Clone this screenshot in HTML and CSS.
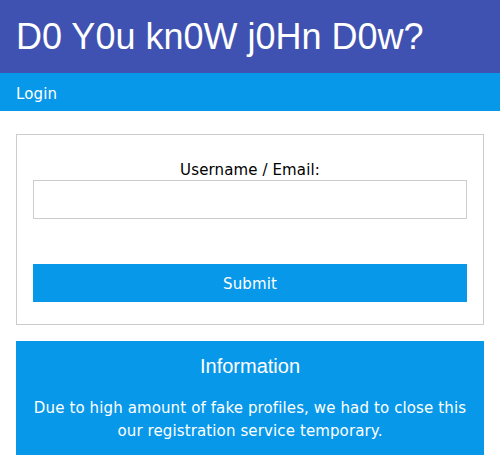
FILE: index.html
```html
<!DOCTYPE html>
<html>
<head>
<meta charset="utf-8">
<link rel="stylesheet" href="styles.css">
</head>
<body>
<header class="top">
  <h1 class="title">D0 Y0u kn0W j0Hn D0w?</h1>
</header>
<nav class="bar">
  <a class="bar-item">Login</a>
</nav>
<main class="main">
  <form class="card">
    <label class="label">Username / Email:</label>
    <input class="input" type="text">
    <button class="submit" type="button">Submit</button>
  </form>
  <section class="info">
    <h3 class="info-title">Information</h3>
    <p class="info-text">Due to high amount of fake profiles, we had to close this our registration service temporary.</p>
  </section>
</main>
</body>
</html>
```

FILE: styles.css
```css
html, body {
  margin: 0;
  padding: 0;
  background: #fff;
  font-family: "DejaVu Sans", Verdana, sans-serif;
  font-size: 15px;
  line-height: 1.5;
  letter-spacing: 0.12px;
  color: #000;
}
.top {
  background: #3f52b1;
  color: #fff;
  padding: 10px 16px 9px;
  letter-spacing: 0;
}
.title {
  margin: 0;
  font-family: "Liberation Sans", Arial, sans-serif;
  font-weight: normal;
  font-size: 36px;
  line-height: 54px;
}
.bar {
  background: #0898ea;
  display: flex;
}
.bar-item {
  color: #fff;
  padding: 10px 16px 6px;
  height: 22px;
  line-height: 22px;
}
.main {
  padding: 23px 16px 0;
}
.card {
  border: 1px solid #ccc;
  padding: 25px 16px 22px;
  display: flex;
  flex-direction: column;
  margin: 0;
}
.label {
  text-align: center;
  line-height: 20px;
}
.input {
  box-sizing: border-box;
  height: 39px;
  border: 1px solid #ccc;
  padding: 8px;
  font: inherit;
  margin: 0;
}
.submit {
  margin-top: 45px;
  height: 38px;
  border: none;
  background: #0898ea;
  color: #fff;
  font: inherit;
  letter-spacing: 0.12px;
  padding: 2px 0 0;
}
.info {
  margin-top: 16px;
  background: #0898ea;
  color: #fff;
  padding: 1px 16px 0;
  text-align: center;
  height: 113px;
}
.info-title {
  margin: 9px 0 0;
  font-family: "Liberation Sans", Arial, sans-serif;
  font-weight: normal;
  font-size: 20px;
  line-height: 30px;
  letter-spacing: 0;
}
.info-text {
  margin: 16px 0 0;
  line-height: 22.5px;
}
```
